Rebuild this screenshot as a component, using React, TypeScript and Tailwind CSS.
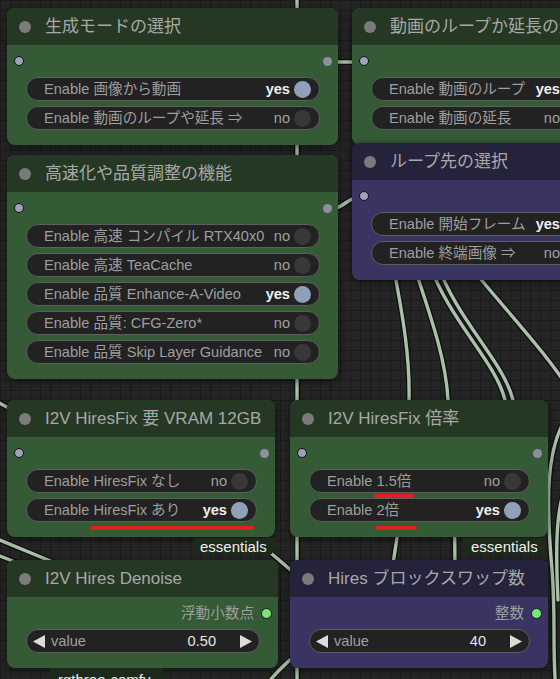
import type { ReactNode } from 'react';

const FONT = "font-['Liberation_Sans','Noto_Sans_CJK_JP',sans-serif]";

type Theme = 'green' | 'blue';

const THEMES: Record<Theme, { head: string; body: string }> = {
  green: { head: 'bg-[#243824]', body: 'bg-[#355a36]' },
  blue: { head: 'bg-[#25223b]', body: 'bg-[#393462]' },
};

// ワイヤー（ノードの後ろに描く）
const WIRES = [
  'M297,-10 L297,690',
  'M328,62 L363,62',
  'M328,209 C346,209 345,197 363,197',
  'M392,260 C404,320 410,360 409,400 C408,470 400,520 392,570',
  'M412,260 C432,320 446,360 448,400 C452,450 455,500 455,570',
  'M428,260 C448,320 495,360 505,400 C512,440 520,480 530,520',
  'M436,260 C456,320 503,360 513,400 C520,440 530,480 540,520',
  'M465,260 C505,310 545,350 575,398',
  'M566,418 C546,450 546,500 552,570 C556,620 552,650 556,690',
  'M572,470 C556,500 555,540 558,600',
  'M-10,398 L40,425',
  'M-10,536 L60,565',
  'M-10,552 L30,568',
  'M262,690 C276,672 288,660 305,648',
  'M265,548 L300,578',
];

function Wires() {
  return (
    <svg className="absolute inset-0" width={560} height={679} viewBox="0 0 560 679" fill="none">
      {WIRES.map((d) => (
        <path key={'b' + d} d={d} stroke="#101010" strokeWidth={6} strokeLinecap="round" />
      ))}
      {WIRES.map((d) => (
        <path key={d} d={d} stroke="#a9c1a9" strokeWidth={3.4} strokeLinecap="round" />
      ))}
    </svg>
  );
}

function Node({
  pos,
  theme,
  title,
  children,
}: {
  pos: string;
  theme: Theme;
  title: string;
  children: ReactNode;
}) {
  const t = THEMES[theme];
  return (
    <div
      className={`absolute ${pos} flex flex-col overflow-hidden rounded-lg shadow-[0_2px_8px_rgba(0,0,0,0.55)] ${t.body}`}
    >
      <div className={`flex h-[37px] shrink-0 items-center pl-3 ${t.head}`}>
        <span className="h-3 w-3 shrink-0 rounded-full bg-[#7b7b7b]" />
        <span className="ml-[14px] whitespace-nowrap text-[17px] leading-none text-[#a8a8a8]">
          {title}
        </span>
      </div>
      <div className="flex flex-col pb-[15px]">{children}</div>
    </div>
  );
}

function Slots({ output = true }: { output?: boolean }) {
  return (
    <div className="flex h-8 items-center justify-between pl-[7px] pr-[6px]">
      <span className="h-[10px] w-[10px] rounded-full border-[1.5px] border-[#111] bg-[#a0a0bb]" />
      {output && <span className="h-[9px] w-[9px] rounded-full bg-[#8e8e9e]" />}
    </div>
  );
}

function OutLabel({ label }: { label: string }) {
  return (
    <div className="flex h-8 items-center justify-end pr-[6px] text-[14.6px] leading-none text-[#9e9e9e]">
      <span>{label}</span>
      <span className="ml-[7px] h-[11px] w-[11px] rounded-full border border-[#1a1a1a] bg-[#7be57b]" />
    </div>
  );
}

function Widgets({ children }: { children: ReactNode }) {
  return <div className="flex flex-col gap-[5px] pl-[19px] pr-[18px]">{children}</div>;
}

function Toggle({ label, on }: { label: string; on?: boolean }) {
  return (
    <div className="flex h-6 items-center rounded-full border border-[#5e5e5e] bg-[#222] pl-[17px] pr-[8px] text-[14.6px] leading-none">
      <span className="min-w-0 flex-1 whitespace-nowrap text-[#9e9e9e]">{label}</span>
      <span className={on ? 'font-bold text-[#f0f0f0]' : 'text-[#a0a0a0]'}>{on ? 'yes' : 'no'}</span>
      <span
        className={`ml-1 h-[17px] w-[17px] shrink-0 rounded-full ${on ? 'bg-[#8fa1b9]' : 'bg-[#383838]'}`}
      />
    </div>
  );
}

function NumberWidget({ value }: { value: string }) {
  return (
    <div className="flex h-6 items-center rounded-full border border-[#5e5e5e] bg-[#222] pl-[6px] pr-[7px] text-[14.6px] leading-none">
      <svg width={12} height={13} viewBox="0 0 12 13">
        <polygon points="12,0 12,13 0,6.5" fill="#dcdcdc" />
      </svg>
      <span className="ml-[6px] flex-1 text-[#a0a0a0]">value</span>
      <span className="text-[#e6e6e6]">{value}</span>
      <svg className="ml-[24px]" width={12} height={13} viewBox="0 0 12 13">
        <polygon points="0,0 0,13 12,6.5" fill="#dcdcdc" />
      </svg>
    </div>
  );
}

function Underline({ pos }: { pos: string }) {
  return <div className={`absolute ${pos} h-1 rounded-full bg-[#e2211f]`} />;
}

function Badge({ pos, text }: { pos: string; text: string }) {
  return (
    <div
      className={`absolute ${pos} rounded-b-md bg-[#1b2a1b] text-[15px] leading-[17px] text-[#f0f0f0]`}
    >
      {text}
    </div>
  );
}

export default function App() {
  return (
    <div
      className={`relative h-[679px] w-[560px] overflow-hidden bg-[#252525] bg-[linear-gradient(to_right,#1b1b1b_1px,transparent_1px),linear-gradient(to_bottom,#1b1b1b_1px,transparent_1px)] bg-size-[10px_10px] ${FONT}`}
    >
      <Wires />

      <Node pos="left-[7px] top-[8px] w-[331px]" theme="green" title="生成モードの選択">
        <Slots />
        <Widgets>
          <Toggle label="Enable 画像から動画" on />
          <Toggle label="Enable 動画のループや延長 ⇒" />
        </Widgets>
      </Node>

      <Node pos="left-[352px] top-[8px] w-[256px]" theme="green" title="動画のループか延長の選択">
        <Slots />
        <Widgets>
          <Toggle label="Enable 動画のループ" on />
          <Toggle label="Enable 動画の延長" />
        </Widgets>
      </Node>

      <Node pos="left-[352px] top-[143px] w-[256px]" theme="blue" title="ループ先の選択">
        <Slots />
        <Widgets>
          <Toggle label="Enable 開始フレーム" on />
          <Toggle label="Enable 終端画像 ⇒" />
        </Widgets>
      </Node>

      <Node pos="left-[7px] top-[155px] w-[331px]" theme="green" title="高速化や品質調整の機能">
        <Slots />
        <Widgets>
          <Toggle label="Enable 高速 コンパイル RTX40x0" />
          <Toggle label="Enable 高速 TeaCache" />
          <Toggle label="Enable 品質 Enhance-A-Video" on />
          <Toggle label="Enable 品質: CFG-Zero*" />
          <Toggle label="Enable 品質 Skip Layer Guidance" />
        </Widgets>
      </Node>

      <Node pos="left-[7px] top-[400px] w-[268px]" theme="green" title="I2V HiresFix 要 VRAM 12GB">
        <Slots />
        <Widgets>
          <Toggle label="Enable HiresFix なし" />
          <Toggle label="Enable HiresFix あり" on />
        </Widgets>
      </Node>

      <Node pos="left-[290px] top-[400px] w-[258px]" theme="green" title="I2V HiresFix 倍率">
        <Slots />
        <Widgets>
          <Toggle label="Enable 1.5倍" />
          <Toggle label="Enable 2倍" on />
        </Widgets>
      </Node>

      <Badge pos="left-[193px] top-[538px] px-[7px]" text="essentials" />
      <Badge pos="left-[463px] top-[538px] px-[8px]" text="essentials" />

      <Node pos="left-[7px] top-[560px] w-[271px]" theme="green" title="I2V Hires Denoise">
        <OutLabel label="浮動小数点" />
        <Widgets>
          <NumberWidget value="0.50" />
        </Widgets>
      </Node>

      <Node pos="left-[290px] top-[560px] w-[258px]" theme="blue" title="Hires ブロックスワップ数">
        <OutLabel label="整数" />
        <Widgets>
          <NumberWidget value="40" />
        </Widgets>
      </Node>

      <Badge pos="left-[50px] top-[668px] pl-[8px] pr-[12px] pt-[3px] pb-2" text="rgthree-comfy" />

      <Underline pos="left-[90px] top-[526px] w-[164px]" />
      <Underline pos="left-[374px] top-[494px] w-[40px]" />
      <Underline pos="left-[375px] top-[526px] w-[42px]" />
    </div>
  );
}
